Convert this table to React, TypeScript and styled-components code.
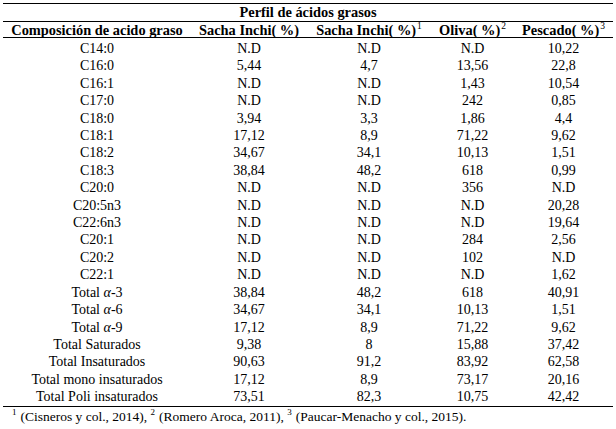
import React from "react";
import styled, { createGlobalStyle } from "styled-components";

const GlobalStyle = createGlobalStyle`
  html, body {
    margin: 0;
    padding: 0;
    background: #ffffff;
  }
  body {
    font-family: "Liberation Serif", "Times New Roman", serif;
    color: #000000;
  }
`;

const Page = styled.div`
  width: 616px;
  height: 429px;
  padding: 3px 3px 0 3px;
  box-sizing: border-box;
  overflow: hidden;
`;

const Table = styled.table`
  width: 610px;
  table-layout: fixed;
  border-collapse: separate;
  border-spacing: 0;
  border-top: 1px solid #000;
  border-bottom: 1px solid #000;
`;

const Col = styled.col<{ $w: number }>`
  width: ${(p) => p.$w}px;
`;

const TitleCell = styled.th`
  font-size: 14.4px;
  font-weight: bold;
  line-height: 17px;
  padding: 0;
  text-align: center;
  border-bottom: 1px solid #000;
`;

const HeadCell = styled.th`
  font-size: 14.4px;
  font-weight: bold;
  line-height: 14px;
  padding: 1px 0 0 0;
  text-align: center;
  white-space: nowrap;
  border-bottom: 1px solid #000;
`;

const Sup = styled.sup`
  font-size: 9.5px;
  font-weight: normal;
  line-height: 0;
  vertical-align: super;
  margin-left: 1px;
`;

const Cell = styled.td<{ $first?: boolean }>`
  font-size: 14px;
  line-height: 17.4px;
  padding: ${(p) => (p.$first ? "2px 0 0 0" : "0")};
  text-align: center;
  white-space: nowrap;
`;

const Alpha = styled.span`
  font-style: italic;
`;

const Footnote = styled.div`
  font-size: 13.5px;
  line-height: 20px;
  padding: 0 0 0 9px;
`;

const FootSup = styled.sup`
  font-size: 9px;
  line-height: 0;
  vertical-align: super;
  margin-right: 4px;
`;

type Row = [React.ReactNode, string, string, string, string];

const a = <Alpha>α</Alpha>;

const rows: Row[] = [
  ["C14:0", "N.D", "N.D", "N.D", "10,22"],
  ["C16:0", "5,44", "4,7", "13,56", "22,8"],
  ["C16:1", "N.D", "N.D", "1,43", "10,54"],
  ["C17:0", "N.D", "N.D", "242", "0,85"],
  ["C18:0", "3,94", "3,3", "1,86", "4,4"],
  ["C18:1", "17,12", "8,9", "71,22", "9,62"],
  ["C18:2", "34,67", "34,1", "10,13", "1,51"],
  ["C18:3", "38,84", "48,2", "618", "0,99"],
  ["C20:0", "N.D", "N.D", "356", "N.D"],
  ["C20:5n3", "N.D", "N.D", "N.D", "20,28"],
  ["C22:6n3", "N.D", "N.D", "N.D", "19,64"],
  ["C20:1", "N.D", "N.D", "284", "2,56"],
  ["C20:2", "N.D", "N.D", "102", "N.D"],
  ["C22:1", "N.D", "N.D", "N.D", "1,62"],
  [<>Total {a}-3</>, "38,84", "48,2", "618", "40,91"],
  [<>Total {a}-6</>, "34,67", "34,1", "10,13", "1,51"],
  [<>Total {a}-9</>, "17,12", "8,9", "71,22", "9,62"],
  ["Total Saturados", "9,38", "8", "15,88", "37,42"],
  ["Total Insaturados", "90,63", "91,2", "83,92", "62,58"],
  ["Total mono insaturados", "17,12", "8,9", "73,17", "20,16"],
  ["Total Poli insaturados", "73,51", "82,3", "10,75", "42,42"],
];

export default function App() {
  return (
    <Page>
      <GlobalStyle />
      <Table>
        <colgroup>
          <Col $w={188} />
          <Col $w={116} />
          <Col $w={124} />
          <Col $w={83} />
          <Col $w={99} />
        </colgroup>
        <thead>
          <tr>
            <TitleCell colSpan={5}>Perfil de ácidos grasos</TitleCell>
          </tr>
          <tr>
            <HeadCell>Composición de acido graso</HeadCell>
            <HeadCell>Sacha Inchi( %)</HeadCell>
            <HeadCell>
              Sacha Inchi( %)<Sup>1</Sup>
            </HeadCell>
            <HeadCell>
              Oliva( %)<Sup>2</Sup>
            </HeadCell>
            <HeadCell>
              Pescado( %)<Sup>3</Sup>
            </HeadCell>
          </tr>
        </thead>
        <tbody>
          {rows.map((r, i) => (
            <tr key={i}>
              {r.map((c, j) => (
                <Cell key={j} $first={i === 0}>
                  {c}
                </Cell>
              ))}
            </tr>
          ))}
        </tbody>
      </Table>
      <Footnote>
        <FootSup>1</FootSup>(Cisneros y col., 2014), <FootSup>2</FootSup>(Romero
        Aroca, 2011), <FootSup>3</FootSup>(Paucar-Menacho y col., 2015).
      </Footnote>
    </Page>
  );
}
